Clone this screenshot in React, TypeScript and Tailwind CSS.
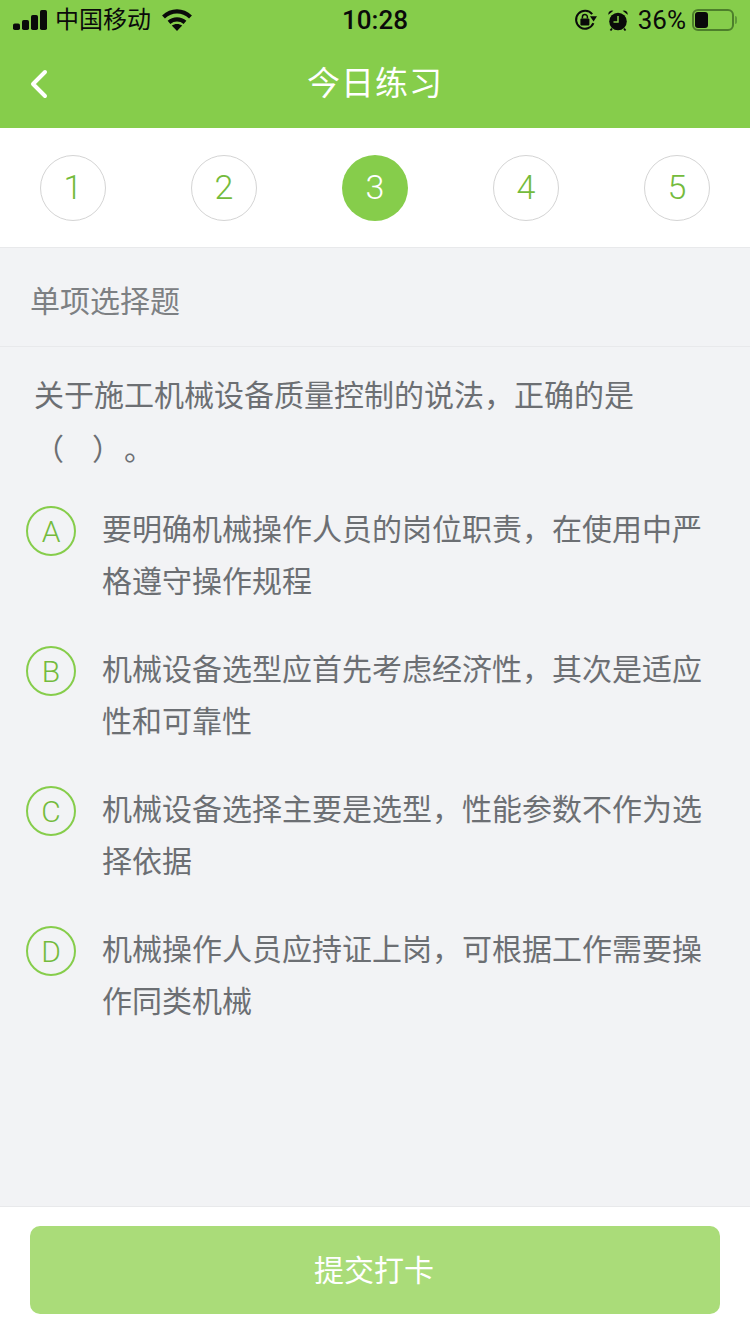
import { ChevronLeft } from 'lucide-react';

const FONT = "font-['Roboto','Noto_Sans_CJK_SC',sans-serif]";

const options = [
  { key: 'A', lines: ['要明确机械操作人员的岗位职责，在使用中严', '格遵守操作规程'] },
  { key: 'B', lines: ['机械设备选型应首先考虑经济性，其次是适应', '性和可靠性'] },
  { key: 'C', lines: ['机械设备选择主要是选型，性能参数不作为选', '择依据'] },
  { key: 'D', lines: ['机械操作人员应持证上岗，可根据工作需要操', '作同类机械'] },
];

const SignalIcon = () => (
  <svg width="34" height="20" viewBox="0 0 34 20" fill="#0a0a0a">
    <rect x="0" y="13.5" width="7" height="6.5" rx="1.8" />
    <rect x="9" y="10" width="7" height="10" rx="1.8" />
    <rect x="18" y="5" width="7" height="15" rx="1.8" />
    <rect x="27" y="0" width="7" height="20" rx="1.8" />
  </svg>
);

const WifiIcon = () => (
  <svg width="30" height="22" viewBox="0 0 30 22" fill="none" stroke="#0a0a0a" strokeWidth="4.2">
    <path d="M1.5 8C9.5 .6 20.5 .6 28.5 8" />
    <path d="M7 13.4C11.6 9.4 18.4 9.4 23 13.4" />
    <path d="M15 22L9.8 16.6C12.6 14.4 17.4 14.4 20.2 16.6Z" fill="#0a0a0a" stroke="none" />
  </svg>
);

const RotationLockIcon = () => (
  <svg width="23" height="22" viewBox="0 0 23 22" fill="none">
    <path d="M19.4 14.2A9 9 0 1 1 18.2 5.2" stroke="#0a0a0a" strokeWidth="2" />
    <path d="M16 7.2H23L19.6 12.4Z" fill="#0a0a0a" />
    <rect x="6.4" y="9.6" width="9" height="6.8" rx="1" fill="#0a0a0a" />
    <path d="M8.4 9.6V8a2.5 2.5 0 0 1 5 0v1.6" stroke="#0a0a0a" strokeWidth="1.5" />
  </svg>
);

const AlarmIcon = () => (
  <svg width="20" height="21" viewBox="0 0 20 21" fill="none">
    <circle cx="10" cy="11.5" r="8.8" fill="#0a0a0a" />
    <path d="M.4 4.8A3.6 3.6 0 0 1 5.4 .8Z" fill="#0a0a0a" />
    <path d="M19.6 4.8A3.6 3.6 0 0 0 14.6 .8Z" fill="#0a0a0a" />
    <path d="M10 6V12H5.5" stroke="#86cd4b" strokeWidth="1.5" />
    <path d="M4 18.5L2.5 20.5M16 18.5L17.5 20.5" stroke="#0a0a0a" strokeWidth="1.8" />
  </svg>
);

const BatteryIcon = () => (
  <div className="flex items-center gap-[1px]">
    <div className="flex h-[22px] w-[42px] items-center rounded-[6px] border-2 border-[#4d7f2b] p-[1px]">
      <div className="h-full w-[13px] rounded-[3px] bg-[#0a0a0a]" />
    </div>
    <div className="h-[8px] w-[2px] rounded-r-full bg-[#5f9a38]" />
  </div>
);

const StatusBar = () => (
  <div className="flex h-[40px] items-center justify-between px-[13px] text-[#0a0a0a]">
    <div className="flex w-[230px] items-center">
      <SignalIcon />
      <span className="ml-[8px] text-[24px] leading-none">中国移动</span>
      <span className="ml-[11px]">
        <WifiIcon />
      </span>
    </div>
    <span className="text-[26px] font-medium leading-none">10:28</span>
    <div className="flex w-[230px] items-center justify-end">
      <RotationLockIcon />
      <span className="ml-[11px]">
        <AlarmIcon />
      </span>
      <span className="ml-[10px] mr-[6px] text-[26px] leading-none">36%</span>
      <BatteryIcon />
    </div>
  </div>
);

export default function App() {
  return (
    <div className={`${FONT} flex h-[1334px] w-[750px] flex-col overflow-hidden bg-[#f2f3f5]`}>
      <header className="h-[128px] bg-[#86cd4b]">
        <StatusBar />
        <div className="relative flex h-[88px] items-center justify-center">
          <ChevronLeft
            className="absolute left-[15px] top-[20px] text-white"
            size={48}
            strokeWidth={4}
            absoluteStrokeWidth
          />
          <span className="text-[33px] tracking-[1px] text-white">今日练习</span>
        </div>
      </header>

      <nav className="flex h-[120px] items-center justify-between border-b border-[#e8e9eb] bg-white px-[40px]">
        {[1, 2, 3, 4, 5].map((n) =>
          n === 3 ? (
            <div
              key={n}
              className="flex h-[66px] w-[66px] items-center justify-center rounded-full bg-[#86cd4b] text-[34px] font-light text-white"
            >
              {n}
            </div>
          ) : (
            <div
              key={n}
              className="flex h-[66px] w-[66px] items-center justify-center rounded-full border border-[#d4d4d4] text-[34px] font-light text-[#74bb3c]"
            >
              {n}
            </div>
          ),
        )}
      </nav>

      <div className="flex h-[99px] items-center border-b border-[#e8e9eb] pl-[30px] pt-[8px] text-[30px] text-[#7d8083]">
        单项选择题
      </div>

      <main className="flex-1">
        <div className="pl-[34px] pt-[22px] text-[30px] leading-[54px] text-[#6c6f73]">
          <div>关于施工机械设备质量控制的说法，正确的是</div>
          <div className="flex">
            <span>（</span>
            <span className="ml-[28px]">）</span>
            <span className="ml-[2px]">。</span>
          </div>
        </div>

        <div className="mt-[27px] flex flex-col gap-[36px] pl-[26px]">
          {options.map((o) => (
            <div key={o.key} className="flex">
              <div className="mt-[2px] flex h-[50px] w-[50px] items-center justify-center rounded-full border-2 border-[#86cd4b] text-[30px] font-light text-[#74bb3c]">
                {o.key}
              </div>
              <div className="ml-[26px] text-[30px] leading-[52px] text-[#6c6f73]">
                {o.lines.map((line) => (
                  <div key={line}>{line}</div>
                ))}
              </div>
            </div>
          ))}
        </div>
      </main>

      <footer className="h-[128px] border-t border-[#e8e9eb] bg-white px-[30px] pt-[19px]">
        <button className="h-[88px] w-full rounded-[10px] bg-[#aadc79] pr-[2px] text-[30px] text-white">提交打卡</button>
      </footer>
    </div>
  );
}
